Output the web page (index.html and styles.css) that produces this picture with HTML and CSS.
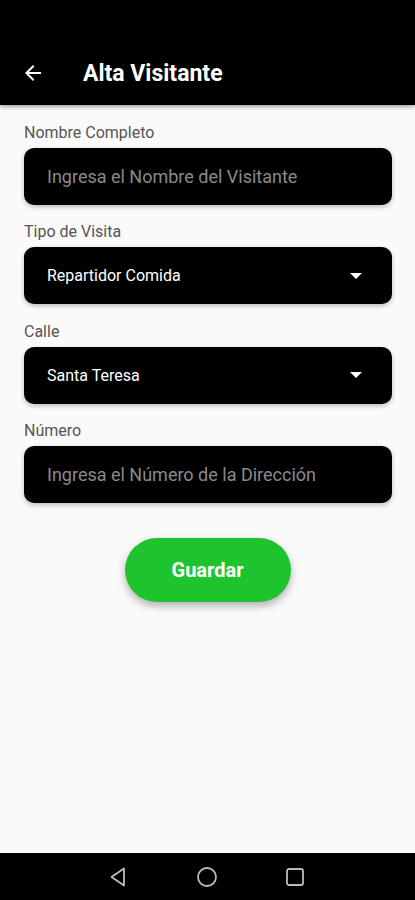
FILE: index.html
```html
<!DOCTYPE html>
<html lang="es">
<head>
  <meta charset="UTF-8" />
  <meta name="viewport" content="width=device-width, initial-scale=1.0"/>
  <title>Alta Visitante</title>
  <link rel="stylesheet" href="styles.css">
</head>
<body>
  <div class="screen">
    <header class="app-bar">
      <svg class="back" width="24" height="24" viewBox="0 0 24 24">
        <path d="M20 11H7.83l5.59-5.59L12 4l-8 8 8 8 1.41-1.41L7.83 13H20v-2z" fill="#fff"/>
      </svg>
      <h1>Alta Visitante</h1>
    </header>

    <main class="form">
      <label class="label">Nombre Completo</label>
      <div class="field">
        <span class="placeholder">Ingresa el Nombre del Visitante</span>
      </div>

      <label class="label">Tipo de Visita</label>
      <div class="field select">
        <span class="value">Repartidor Comida</span>
        <span class="caret"></span>
      </div>

      <label class="label">Calle</label>
      <div class="field select">
        <span class="value">Santa Teresa</span>
        <span class="caret"></span>
      </div>

      <label class="label">Número</label>
      <div class="field">
        <span class="placeholder">Ingresa el Número de la Dirección</span>
      </div>

      <div class="actions">
        <button class="save">Guardar</button>
      </div>
    </main>

    <nav class="sys-nav">
      <svg width="22" height="22" viewBox="0 0 22 22">
        <path d="M17 2.5 L4.5 11 L17 19.5 Z" fill="none" stroke="#bbb" stroke-width="1.8" stroke-linejoin="round"/>
      </svg>
      <svg width="22" height="22" viewBox="0 0 22 22">
        <circle cx="11" cy="11" r="9" fill="none" stroke="#bbb" stroke-width="1.8"/>
      </svg>
      <svg width="20" height="20" viewBox="0 0 20 20">
        <rect x="2" y="2" width="16" height="16" rx="2" fill="none" stroke="#bbb" stroke-width="1.8"/>
      </svg>
    </nav>
  </div>
</body>
</html>
```

FILE: styles.css
```css
* {
  box-sizing: border-box;
}

body {
  margin: 0;
  font-family: Roboto, 'Noto Sans', sans-serif;
  background: #fafafa;
}

.screen {
  height: 900px;
  display: flex;
  flex-direction: column;
}

.app-bar {
  height: 105px;
  background: #000;
  display: flex;
  align-items: flex-end;
  padding: 0 0 18px 21px;
  box-shadow: 0 2px 4px rgba(0, 0, 0, 0.35);
  position: relative;
  z-index: 1;
}

.back {
  display: block;
  margin-bottom: 2px;
}

.app-bar h1 {
  margin: 0 0 0 38px;
  color: #fff;
  font-size: 23px;
  font-weight: 700;
  line-height: 26px;
}

.form {
  flex: 1;
  padding: 19px 23px 0 24px;
  display: flex;
  flex-direction: column;
}

.label {
  color: #555;
  font-size: 16px;
  line-height: 18px;
  margin-bottom: 6px;
}

.field {
  height: 57px;
  background: #000;
  border-radius: 10px;
  box-shadow: 0 2px 5px rgba(0, 0, 0, 0.25);
  display: flex;
  align-items: center;
  padding: 0 23px;
  margin-bottom: 18.4px;
}

.placeholder {
  color: #8a8a8a;
  font-size: 18px;
}

.value {
  color: #fff;
  font-size: 16px;
  font-weight: 400;
  flex: 1;
}

.caret {
  width: 0;
  height: 0;
  border-left: 6px solid transparent;
  border-right: 6px solid transparent;
  border-top: 6px solid #fff;
  margin-right: 7px;
}

.actions {
  display: flex;
  justify-content: center;
  padding-top: 16px;
  padding-right: 1px;
}

.save {
  width: 166px;
  height: 64px;
  border: none;
  border-radius: 32px;
  background: #1ec42e;
  color: #fff;
  font-family: Roboto, 'Noto Sans', sans-serif;
  font-size: 20px;
  font-weight: 700;
  box-shadow: 0 4px 8px rgba(0, 0, 0, 0.3);
}

.sys-nav {
  height: 47px;
  background: #000;
  display: flex;
  align-items: center;
  justify-content: center;
  gap: 67px;
  padding-right: 4px;
}
```
